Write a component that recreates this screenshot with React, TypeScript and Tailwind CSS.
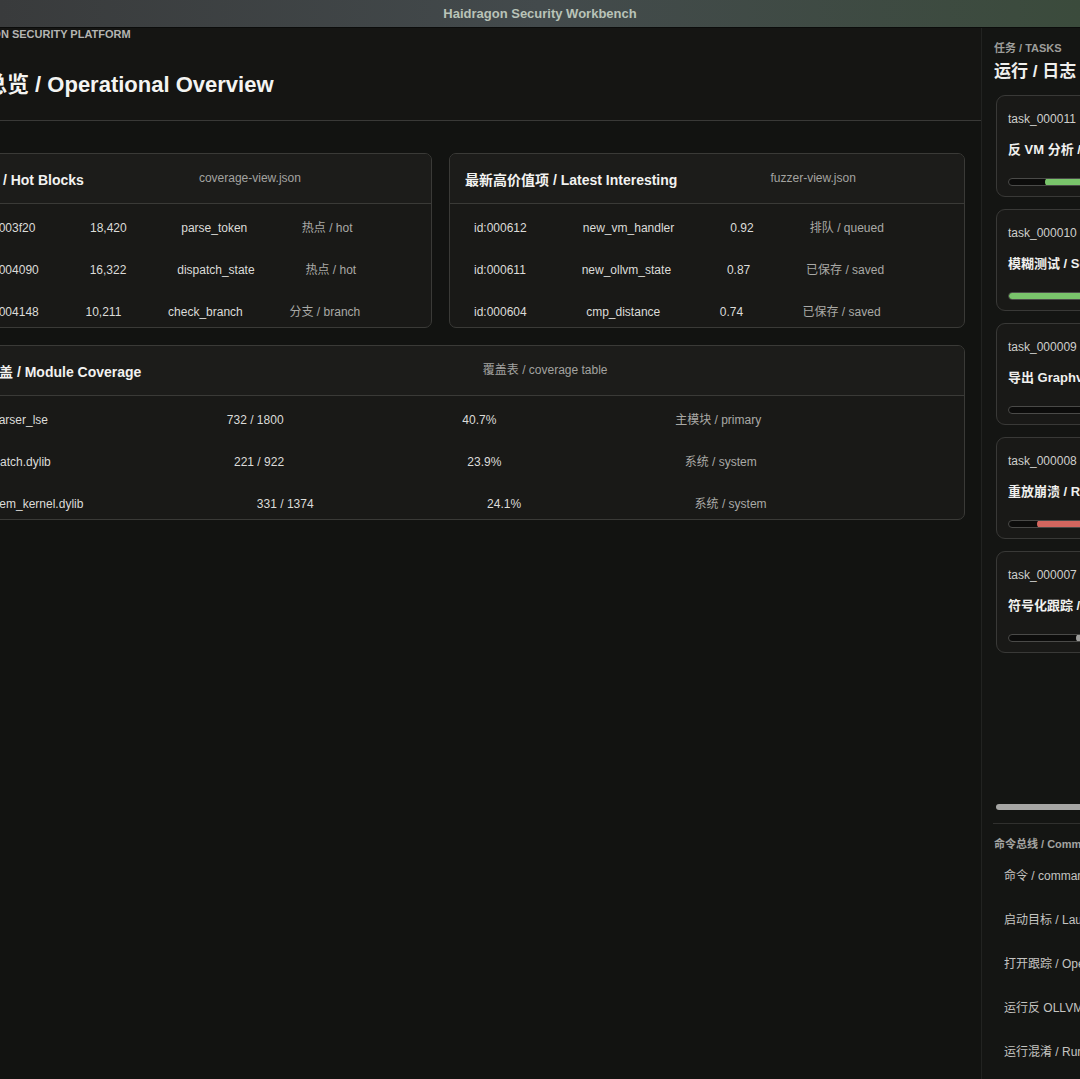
import React from "react";

const FONT = "font-['Liberation_Sans','Noto_Sans_CJK_SC',sans-serif]";

type Row = string[];

const hotRows: Row[] = [
  ["0x100003f20", "18,420", "parse_token", "热点 / hot"],
  ["0x100004090", "16,322", "dispatch_state", "热点 / hot"],
  ["0x100004148", "10,211", "check_branch", "分支 / branch"],
];

const latestRows: Row[] = [
  ["id:000612", "new_vm_handler", "0.92", "排队 / queued"],
  ["id:000611", "new_ollvm_state", "0.87", "已保存 / saved"],
  ["id:000604", "cmp_distance", "0.74", "已保存 / saved"],
];

const moduleRows: Row[] = [
  ["test_parser_lse", "732 / 1800", "40.7%", "主模块 / primary"],
  ["libdispatch.dylib", "221 / 922", "23.9%", "系统 / system"],
  ["libsystem_kernel.dylib", "331 / 1374", "24.1%", "系统 / system"],
];

function Card({
  title,
  meta,
  rows,
  className,
}: {
  title: string;
  meta: string;
  rows: Row[];
  className?: string;
}) {
  return (
    <div
      className={
        "h-[175px] overflow-hidden rounded-[7px] border border-[#3a3a37] bg-[#191917] " +
        (className ?? "")
      }
    >
      <div className="flex h-[50px] items-start border-b border-[#3a3a37] bg-[#1c1c1a] px-[15px] pt-[16px]">
        <div className="flex-auto text-[14px] font-bold leading-[20px] text-[#f2f2f0]">{title}</div>
        <div className="flex-auto text-[12px] leading-[16px] text-[#a3a3a0]">{meta}</div>
      </div>
      <div className="flex flex-col gap-[26px] px-[24px] pt-[16px]">
        {rows.map((r, i) => (
          <div key={i} className="flex items-baseline text-[12px] leading-[16px]">
            {r.map((c, j) => (
              <div
                key={j}
                className={
                  "flex-auto whitespace-nowrap " +
                  (j === 3 ? "text-[#a9a9a6]" : "text-[#dcdcd9]")
                }
              >
                {c}
              </div>
            ))}
          </div>
        ))}
      </div>
    </div>
  );
}

type Task = {
  id: string;
  title: string;
  fill?: { left: number; color: string };
};

const tasks: Task[] = [
  { id: "task_000011", title: "反 VM 分析 / Anti-VM analysis", fill: { left: 36, color: "#79c46b" } },
  { id: "task_000010", title: "模糊测试 / Seed fuzzing", fill: { left: 0, color: "#79c46b" } },
  { id: "task_000009", title: "导出 Graphviz / Export graph" },
  { id: "task_000008", title: "重放崩溃 / Replay crash", fill: { left: 28, color: "#d3665f" } },
  { id: "task_000007", title: "符号化跟踪 / Symbolic trace", fill: { left: 67, color: "#9e9e9c" } },
];

const commands = [
  "命令 / command palette",
  "启动目标 / Launch target",
  "打开跟踪 / Open trace",
  "运行反 OLLVM / Run anti-OLLVM",
  "运行混淆 / Run deobfuscation",
];

export default function App() {
  return (
    <div className={"h-[1079px] w-[1080px] overflow-hidden bg-[#121311] " + FONT}>
      <div className="flex h-[28px] items-center justify-center border-b border-[#0b0c0b] bg-gradient-to-r from-[#393b3c] via-[#434a4c] to-[#3b4b3c]">
        <span className="text-[13px] font-bold text-[#b9c3b8]">Haidragon Security Workbench</span>
      </div>
      <div className="ml-[-75px] flex h-[1051px] w-[1500px]">
        <main className="flex w-[1057px] shrink-0 flex-col border-r border-[#222321]">
          <header className="h-[93px] border-b border-[#393937] bg-[#151513] px-[16px]">
            <div className="text-[11px] font-bold leading-[12px] text-[#b4b4b1]">
              HAIDRAGON SECURITY PLATFORM
            </div>
            <div className="mt-[31px] text-[22px] font-bold leading-[28px] text-[#f4f4f2]">
              运行总览 / Operational Overview
            </div>
          </header>
          <div className="flex flex-col gap-[17px] px-[16px] pt-[32px]">
            <div className="flex gap-[17px]">
              <Card
                className="w-[491px] shrink-0"
                title="热点块 / Hot Blocks"
                meta="coverage-view.json"
                rows={hotRows}
              />
              <Card
                className="w-[516px] shrink-0"
                title="最新高价值项 / Latest Interesting"
                meta="fuzzer-view.json"
                rows={latestRows}
              />
            </div>
            <Card title="模块覆盖 / Module Coverage" meta="覆盖表 / coverage table" rows={moduleRows} />
          </div>
        </main>
        <aside className="flex w-[400px] shrink-0 flex-col bg-[#141513] pl-[12px] pt-[13px]">
          <div className="text-[11px] font-bold leading-[14px] text-[#9d9d9a]">任务 / TASKS</div>
          <div className="mt-[6px] text-[17px] font-bold leading-[22px] text-[#efefed]">运行 / 日志</div>
          <div className="mt-[12px] flex h-[705px] flex-col gap-[12px] pl-[2px]">
            {tasks.map((t) => (
              <div
                key={t.id}
                className="h-[102px] w-[340px] shrink-0 rounded-[9px] border border-[#393937] bg-[#191917] px-[11px] pt-[15px]"
              >
                <div className="text-[12px] leading-[16px] text-[#cfcfcc]">{t.id}</div>
                <div className="mt-[14px] text-[13px] font-bold leading-[18px] text-[#f0f0ee]">{t.title}</div>
                <div className="relative mt-[19px] h-[8px] w-[300px] overflow-hidden rounded-full border border-[#4a4a48] bg-[#0c0c0b]">
                  {t.fill && (
                    <div
                      className="absolute top-[-1px] bottom-[-1px] right-0 rounded-full"
                      style={{ left: t.fill.left, backgroundColor: t.fill.color }}
                    />
                  )}
                </div>
              </div>
            ))}
          </div>
          <div className="ml-[2px] mt-[4px] h-[6px] w-[320px] rounded-full bg-[#a6a6a4]" />
          <div className="ml-[-1px] mt-[13px] border-t border-[#30302e] pl-[1px] pt-[13px]">
            <div className="text-[11px] font-bold leading-[14px] text-[#a3a3a0]">命令总线 / Command bus</div>
            <div className="mt-[3px] flex flex-col">
              {commands.map((c) => (
                <div key={c} className="flex h-[44px] items-center px-[10px] text-[12px] text-[#c4c4c1]">
                  {c}
                </div>
              ))}
            </div>
          </div>
        </aside>
      </div>
    </div>
  );
}
